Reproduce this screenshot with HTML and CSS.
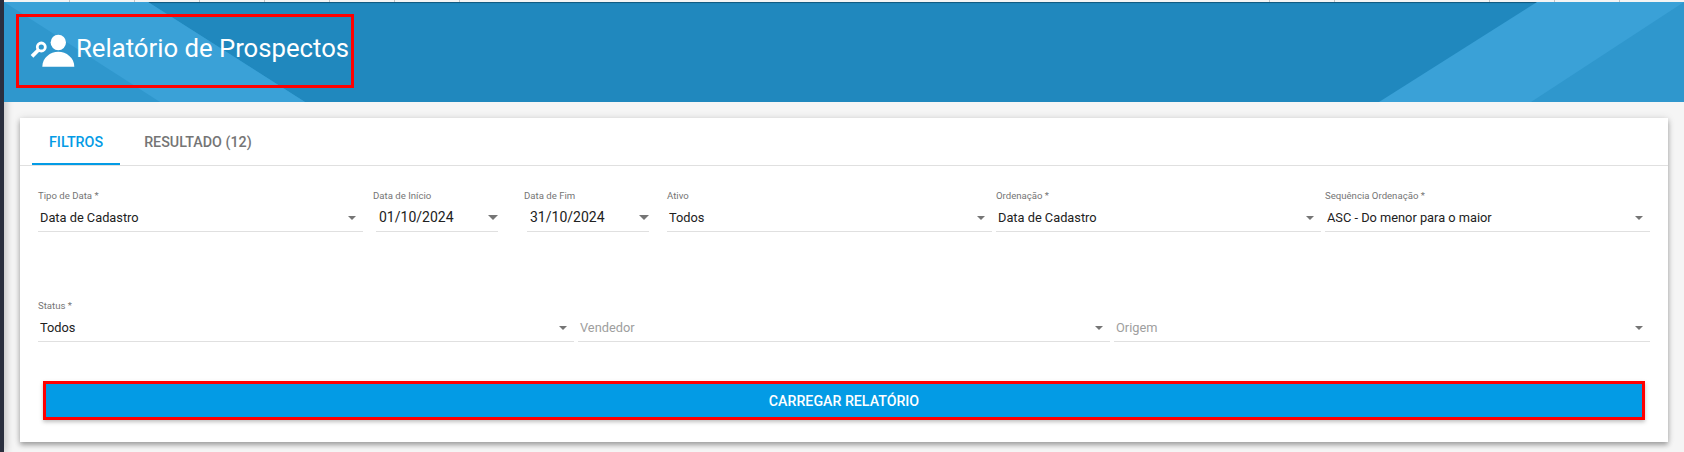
FILE: index.html
```html
<!DOCTYPE html>
<html lang="pt-BR">
<head>
    <meta charset="UTF-8">
    <meta name="viewport" content="width=device-width, initial-scale=1.0">
    <title>Relatório de Prospectos</title>
    <link rel="stylesheet" href="styles.css">
</head>
<body>
    <div class="sidebar"></div>
    <div class="main">
        <div class="top-strip">
            <span class="tick"></span><span class="tick"></span><span class="tick"></span>
            <span class="tick"></span><span class="tick"></span><span class="tick"></span>
            <span class="tick"></span>
            <span class="tick tick-gap"></span><span class="tick"></span>
            <span class="tick tick-gap-2"></span><span class="tick"></span><span class="tick"></span>
        </div>

        <header class="page-header">
            <svg class="header-bg" viewBox="0 0 1680 100" preserveAspectRatio="none" aria-hidden="true">
                <polygon points="0,0 144,0 301,100 0,100" fill="#2f97cd"/>
                <polygon points="0,0 144,0 301,100 156,100" fill="#3aa1d7"/>
                <polygon points="1533,0 1680,0 1680,100 1375,100" fill="#3aa1d7"/>
                <polygon points="1680,0 1680,100 1527,100" fill="#2f97cd"/>
            </svg>
            <div class="page-title">
                <svg class="title-icon" viewBox="0 0 48 40" aria-hidden="true">
                    <circle cx="30.300" cy="9.500" r="7.700" fill="#fff"/>
                    <path d="M14.300 33.700c0-9 8-15 16-15s16 6 16 15z" fill="#fff"/>
                    <circle cx="13.300" cy="14" r="4" fill="none" stroke="#fff" stroke-width="2.800"/>
                    <path d="M10.400 17L4 23.300" fill="none" stroke="#fff" stroke-width="3.800"/>
                </svg>
                <h1>Relatório de Prospectos</h1>
            </div>
        </header>

        <div class="card">
            <div class="tabs">
                <div class="tab tab-active">FILTROS</div>
                <div class="tab">RESULTADO (12)</div>
            </div>

            <div class="form">
                <div class="form-row">
                    <div class="field">
                        <label>Tipo de Data *</label>
                        <div class="control"><span>Data de Cadastro</span><i class="arrow"></i></div>
                    </div>
                    <div class="field field-date date-start">
                        <label>Data de Início</label>
                        <div class="control"><span>01/10/2024</span><i class="arrow arrow-big"></i></div>
                    </div>
                    <div class="field field-date date-end">
                        <label>Data de Fim</label>
                        <div class="control"><span>31/10/2024</span><i class="arrow arrow-big"></i></div>
                    </div>
                    <div class="field field-active">
                        <label>Ativo</label>
                        <div class="control"><span>Todos</span><i class="arrow"></i></div>
                    </div>
                    <div class="field">
                        <label>Ordenação *</label>
                        <div class="control"><span>Data de Cadastro</span><i class="arrow"></i></div>
                    </div>
                    <div class="field">
                        <label>Sequência Ordenação *</label>
                        <div class="control"><span>ASC - Do menor para o maior</span><i class="arrow"></i></div>
                    </div>
                </div>

                <div class="form-row">
                    <div class="field">
                        <label>Status *</label>
                        <div class="control"><span>Todos</span><i class="arrow"></i></div>
                    </div>
                    <div class="field field-seller">
                        <label>&nbsp;</label>
                        <div class="control placeholder"><span>Vendedor</span><i class="arrow"></i></div>
                    </div>
                    <div class="field">
                        <label>&nbsp;</label>
                        <div class="control placeholder"><span>Origem</span><i class="arrow"></i></div>
                    </div>
                </div>
            </div>

            <div class="actions">
                <button class="load-button">CARREGAR RELATÓRIO</button>
            </div>
        </div>
    </div>
</body>
</html>
```

FILE: styles.css
```css
:root {
    --blue: #039be5;
    --header: #2088be;
    --page: #f5f5f5;
    --line: #e0e0e0;
    --text: #212121;
    --muted: #757575;
    --red: #ff0000;
}

* {
    box-sizing: border-box;
}
html, body {
    height: 100%;
}
body {
    margin: 0;
    display: flex;
    overflow: hidden;
    font-family: Roboto, sans-serif;
    background-color: var(--page);
    color: var(--text);
}
.sidebar {
    flex: 0 0 4px;
    background-color: #2a2f3e;
    box-shadow: 0 0 9px rgba(0, 0, 0, 0.45);
}
.main {
    flex: 1;
    min-width: 0;
}

/* strip of the page behind, just visible at the top */
.top-strip {
    display: flex;
    height: 2px;
    background-color: #f4f4f4;
}
.tick {
    width: 65px;
    border-right: 1px solid #c4c4c4;
}
.tick:first-child {
    width: 66px;
}
.tick-gap {
    margin-left: 745px;
}
.tick-gap-2 {
    margin-left: 90px;
}

.page-header {
    position: relative;
    height: 100px;
    padding: 12px 0 0 12px;
    background-color: var(--header);
    box-shadow: inset 0 1px 1px rgba(0, 40, 60, 0.5);
}
.header-bg {
    position: absolute;
    top: 0;
    left: 0;
    width: 100%;
    height: 100%;
}
.page-title {
    position: relative;
    display: flex;
    align-items: center;
    width: 338px;
    height: 74px;
    padding-left: 9px;
    border: 3px solid var(--red);
    color: #ffffff;
}
.title-icon {
    flex: 0 0 48px;
    width: 48px;
    height: 40px;
    margin-top: 4px;
}
.page-title h1 {
    margin: -6px 0 0 0;
    font-size: 25.7px;
    font-weight: 400;
    white-space: nowrap;
}

.card {
    height: 324px;
    margin: 16px 16px 0 16px;
    background-color: #ffffff;
    box-shadow: 0 3px 5px rgba(0, 0, 0, 0.32), 0 0 8px rgba(0, 0, 0, 0.1);
}
.tabs {
    display: flex;
    height: 48px;
    padding-left: 12px;
    border-bottom: 1px solid var(--line);
}
.tab {
    padding: 16px 17px 0 17px;
    margin-right: 7px;
    font-size: 14.3px;
    font-weight: 500;
    color: var(--muted);
}
.tab-active {
    height: 47px;
    color: var(--blue);
    border-bottom: 2px solid var(--blue);
}

.form {
    padding: 23px 18px 0 18px;
}
.form-row {
    display: flex;
    gap: 4px;
    margin-bottom: 67px;
}
.field {
    flex: 1 1 0;
    min-width: 0;
    height: 43px;
}
.field label {
    display: block;
    height: 13px;
    font-size: 9.6px;
    line-height: 13px;
    color: var(--muted);
    white-space: nowrap;
}
.control {
    display: flex;
    align-items: center;
    justify-content: space-between;
    height: 30px;
    padding: 2px 7px 0 2px;
    font-size: 12.8px;
    border-bottom: 1px solid var(--line);
}
.placeholder {
    color: #9e9e9e;
}
.arrow {
    width: 0;
    height: 0;
    border-left: 4px solid transparent;
    border-right: 4px solid transparent;
    border-top: 4px solid var(--muted);
}
.arrow-big {
    border-left-width: 5px;
    border-right-width: 5px;
    border-top-width: 5px;
}
.field-date {
    flex: 0 0 122px;
}
.field-date label {
    margin-left: -3px;
}
.field-date .control {
    padding: 1px 0 0 3px;
    font-size: 14px;
}
.date-start {
    margin-left: 9px;
}
.date-end {
    margin-left: 25px;
}
.field-active {
    margin-left: 14px;
}
.field-seller {
    flex: 0 0 532px;
}

.actions {
    padding: 0 23px;
    margin-top: -28px;
}
.load-button {
    display: block;
    width: 100%;
    height: 39px;
    padding: 1px 0 0 0;
    font-family: inherit;
    font-size: 14.2px;
    font-weight: 500;
    color: #ffffff;
    background-color: var(--blue);
    border: 3px solid var(--red);
    box-shadow: 0 2px 4px rgba(0, 0, 0, 0.25);
}
```
